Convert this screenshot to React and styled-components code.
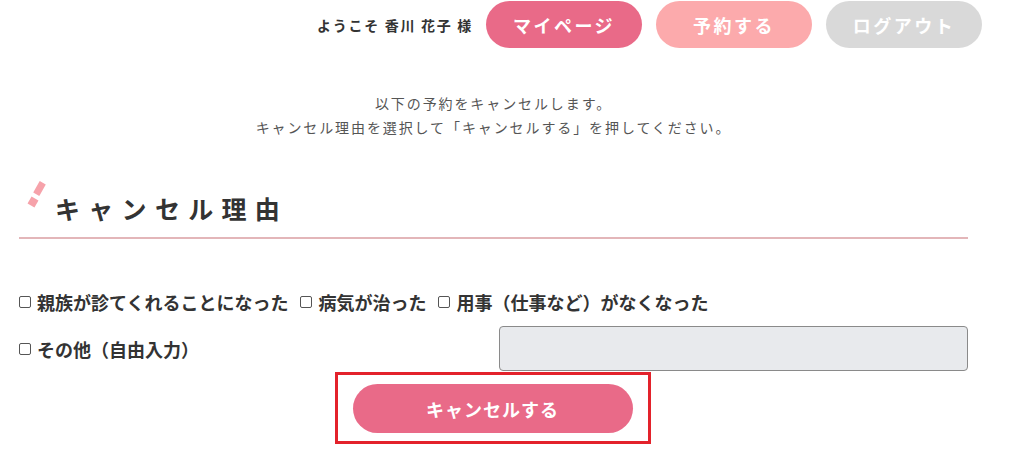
import React from 'react'
import styled, { createGlobalStyle } from 'styled-components';

const GlobalStyle = createGlobalStyle`
  html, body {
    margin: 0;
    padding: 0;
    background: #fff;
  }
  body {
    font-family: "Noto Sans CJK JP", "Noto Sans", sans-serif;
    color: #333;
  }
`

const Page = styled.div`
  width: 1023px;
  height: 460px;
  overflow: hidden;
`

const Header = styled.header`
  display: flex;
  justify-content: flex-end;
  align-items: center;
  gap: 14px;
  margin-top: 1px;
  padding-right: 41px;
`

const Welcome = styled.span`
  font-size: 14px;
  font-weight: 700;
  color: #333;
  margin-right: -1px;
  letter-spacing: 1.7px;
`

const NavButton = styled.a`
  display: flex;
  align-items: center;
  justify-content: center;
  width: 156px;
  height: 47px;
  border-radius: 24px;
  background: ${props => props.bg};
  color: #fff;
  font-size: 18px;
  font-weight: 700;
  letter-spacing: 2.5px;
  text-decoration: none;
`

const Main = styled.main`
  margin: 0 55px 0 19px;
`

const Intro = styled.p`
  margin: 43px 0 0;
  text-align: center;
  font-size: 14px;
  line-height: 24px;
  color: #555;
  letter-spacing: 1.9px;
  font-weight: 400;
`

const Heading = styled.h2`
  position: relative;
  margin: 49px 0 0;
  padding: 0 0 9px 36px;
  font-size: 25px;
  line-height: 40px;
  font-weight: 700;
  letter-spacing: 8.3px;
  color: #333;
  border-bottom: 2px solid #e3b6b9;

  &::before,
  &::after {
    content: '';
    position: absolute;
    background: #f6a2aa;
    transform: rotate(30deg);
  }
  &::before {
    left: 17px;
    top: -6px;
    width: 7px;
    height: 13px;
  }
  &::after {
    left: 10px;
    top: 10px;
    width: 8px;
    height: 8px;
  }
`

const ChoiceRow = styled.div`
  display: flex;
  align-items: center;
  gap: 12px;
  margin-top: 48px;
  height: 30px;
`

const OtherRow = styled.div`
  display: grid;
  grid-template-columns: 1fr 1fr;
  gap: 11px;
  align-items: center;
  margin-top: 9px;
`

const Choice = styled.label`
  display: flex;
  align-items: center;
  gap: 6px;
  font-size: 18px;
  font-weight: 700;
  color: #333;
  white-space: nowrap;
`

const Box = styled.span`
  display: inline-block;
  width: 10px;
  height: 10px;
  border: 1px solid #555;
  border-radius: 2px;
  background: #fff;
`

const FreeInput = styled.div`
  height: 43px;
  background: #e8eaed;
  border: 1px solid #8a8a8a;
  border-radius: 4px;
`

const Highlight = styled.div`
  width: 310px;
  margin: 1px auto 0;
  padding: 9px 0 8px;
  border: 3px solid #e3222b;
  display: flex;
  justify-content: center;
  position: relative;
  left: -1px;
`

const SubmitButton = styled.button`
  width: 280px;
  height: 49px;
  border: none;
  border-radius: 25px;
  background: #e96a88;
  color: #fff;
  font-family: inherit;
  font-size: 18px;
  font-weight: 700;
  letter-spacing: 1px;
`

const reasons = ['親族が診てくれることになった', '病気が治った', '用事（仕事など）がなくなった']

export default function App() {
  return (
    <Page>
      <GlobalStyle />
      <Header>
        <Welcome>ようこそ 香川 花子 様</Welcome>
        <NavButton bg="#e96a88">マイページ</NavButton>
        <NavButton bg="#fcaaac">予約する</NavButton>
        <NavButton bg="#d9d9d9">ログアウト</NavButton>
      </Header>
      <Main>
        <Intro>
          以下の予約をキャンセルします。<br />
          キャンセル理由を選択して「キャンセルする」を押してください。
        </Intro>
        <Heading>キャンセル理由</Heading>
        <ChoiceRow>
          {reasons.map(r => (
            <Choice key={r}><Box />{r}</Choice>
          ))}
        </ChoiceRow>
        <OtherRow>
          <Choice><Box />その他（自由入力）</Choice>
          <FreeInput />
        </OtherRow>
        <Highlight>
          <SubmitButton>キャンセルする</SubmitButton>
        </Highlight>
      </Main>
    </Page>
  )
}
